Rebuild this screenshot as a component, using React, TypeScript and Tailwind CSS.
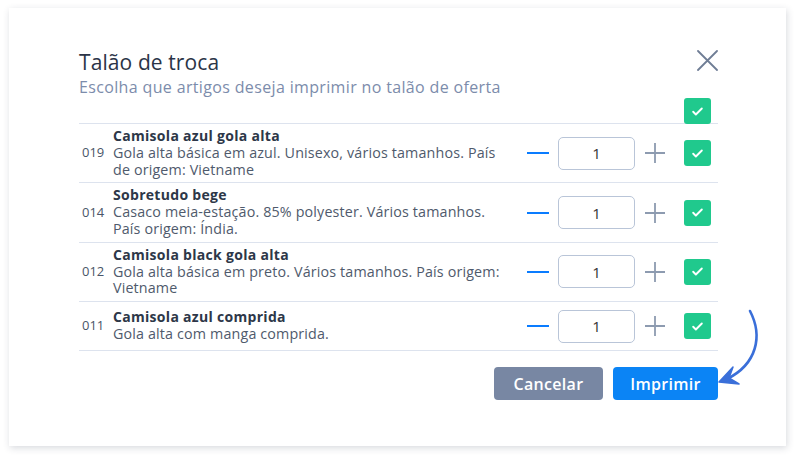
import React, { useState } from 'react';

type Item = { code: string; name: string; desc: string[]; qty: number };

const ITEMS: Item[] = [
  { code: '019', name: 'Camisola azul gola alta', desc: ['Gola alta básica em azul. Unisexo, vários tamanhos. País', 'de origem: Vietname'], qty: 1 },
  { code: '014', name: 'Sobretudo bege', desc: ['Casaco meia-estação. 85% polyester. Vários tamanhos.', 'País origem: Índia.'], qty: 1 },
  { code: '012', name: 'Camisola black gola alta', desc: ['Gola alta básica em preto. Vários tamanhos. País origem:', 'Vietname'], qty: 1 },
  { code: '011', name: 'Camisola azul comprida', desc: ['Gola alta com manga comprida.'], qty: 1 },
];

const Check = () => (
  <div className="w-[27px] h-[26px] rounded-[3px] bg-[#20c98d] flex items-center justify-center shrink-0">
    <svg width="13" height="13" viewBox="0 0 24 24" fill="none" stroke="white" strokeWidth="3.5" strokeLinecap="round" strokeLinejoin="round">
      <path d="M4 12.5l5 5L20 6.5" />
    </svg>
  </div>
);

const App: React.FC = () => {
  const [items] = useState<Item[]>(ITEMS);

  return (
    <div className="w-[800px] h-[461px] bg-white relative" style={{ fontFamily: '"Open Sans", "Noto Sans", sans-serif' }}>
      <div className="ml-[9px] pt-[8px]">
        <div className="w-[777px] h-[438px] bg-white shadow-[1px_2px_7px_rgba(40,50,70,0.18)] pt-[40px] pl-[70px] pr-[68px]">
          {/* Header */}
          <div className="flex justify-between items-start">
            <div>
              <h1 className="text-[21px] leading-[28px] text-[#2b3447] tracking-[0.1px]">Talão de troca</h1>
              <p className="text-[16px] leading-[22px] text-[#7c8cab] tracking-[0.35px]">Escolha que artigos deseja imprimir no talão de oferta</p>
            </div>
            <button className="mt-[2px] text-[#6f7d95]">
              <svg width="21" height="21" viewBox="0 0 21 21" fill="none" stroke="currentColor" strokeWidth="1.8" strokeLinecap="round">
                <path d="M1 1l19 19M20 1L1 20" />
              </svg>
            </button>
          </div>

          <div className="flex justify-end pr-[7px] h-[25px] relative z-10">
            <Check />
          </div>

          {/* Rows */}
          <div className="border-t border-[#dde3ee]">
            {items.map(item => (
              <div key={item.code} className="flex items-center border-b border-[#dde3ee] py-1 min-h-[49px]">
                <div className="w-[34px] pl-[3px] text-[13px] text-[#4a5568]">{item.code}</div>
                <p className="flex-1 leading-[16.8px] text-[14.3px] text-[#4f5a6c] whitespace-nowrap tracking-[0.15px]">
                  <span className="text-[14px] font-bold text-[#2d3748] tracking-[0.3px]">{item.name}</span>
                  {item.desc.map((line, i) => (
                    <React.Fragment key={i}>
                      <br />
                      {line}
                    </React.Fragment>
                  ))}
                </p>
                <div className="flex items-center pr-[7px]">
                  <button className="w-[22px] flex items-center">
                    <svg width="22" height="4" viewBox="0 0 22 4"><path d="M0 2h22" stroke="#0a7cff" strokeWidth="2" /></svg>
                  </button>
                  <input
                    readOnly
                    value={item.qty}
                    className="ml-[9px] w-[77px] h-[33px] rounded-[5px] border border-[#b9c5d8] text-center text-[15px] text-[#333] outline-none"
                  />
                  <button className="ml-[10px] w-[20px] flex items-center">
                    <svg width="20" height="20" viewBox="0 0 20 20"><path d="M0 10h20M10 0v20" stroke="#8d9bb0" strokeWidth="1.8" /></svg>
                  </button>
                  <div className="ml-[19px]">
                    <Check />
                  </div>
                </div>
              </div>
            ))}
          </div>

          {/* Footer */}
          <div className="flex justify-end gap-[10px] mt-[16px]">
            <button className="w-[109px] h-[33px] rounded-[4px] bg-[#7887a3] text-white text-[16px] font-semibold tracking-[0.3px]">Cancelar</button>
            <button className="w-[105px] h-[33px] rounded-[4px] bg-[#0b84f5] text-white text-[16px] font-semibold tracking-[0.3px]">Imprimir</button>
          </div>
        </div>
      </div>

      {/* annotation arrow */}
      <svg className="absolute left-0 top-0 pointer-events-none" width="800" height="461" viewBox="0 0 800 461" fill="none">
        <path d="M750 311 C 763 336, 757 364, 727 379" stroke="#3a6fd9" strokeWidth="2.6" strokeLinecap="round" />
        <path d="M719 382 L733 367 L729 378 L739 384 Z" fill="#3a6fd9" stroke="#3a6fd9" strokeWidth="1.5" strokeLinejoin="round" />
      </svg>
    </div>
  );
};

export default App;
